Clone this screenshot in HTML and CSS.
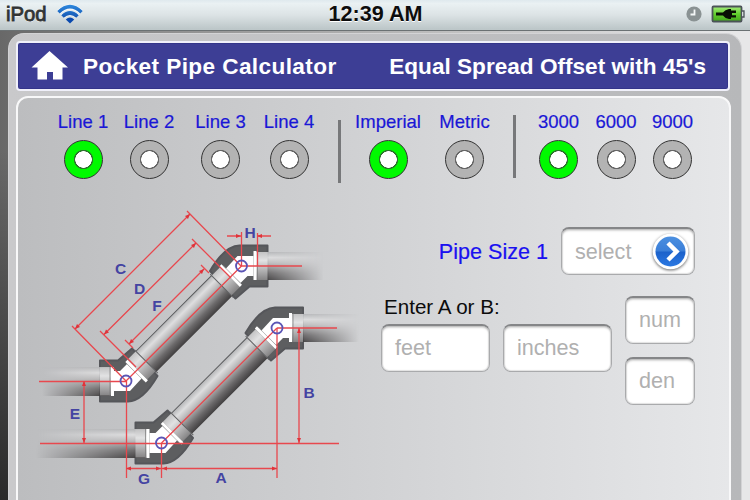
FILE: index.html
```
<!DOCTYPE html>
<html lang="en">
<head>
    <meta charset="UTF-8">
    <meta name="viewport" content="width=device-width, initial-scale=1.0">
    <title>Pocket Pipe Calculator</title>
    <link rel="stylesheet" href="styles.css">
</head>
<body>

    <!-- Status bar -->
    <div class="status-bar">
        <div class="status-left">
            <span class="carrier">iPod</span>
            <svg class="wifi" width="28" height="20" viewBox="0 0 28 20">
                <defs>
                    <linearGradient id="wifiBlue" gradientUnits="userSpaceOnUse" x1="0" y1="0" x2="0" y2="20">
                        <stop offset="0" stop-color="#2f8be0"/>
                        <stop offset="1" stop-color="#0a3f9e"/>
                    </linearGradient>
                </defs>
                <g fill="none" stroke="#fff" stroke-width="5" opacity="0.7">
                    <path d="M2.500 8.200Q14 -1.800 25.500 8.200M6.500 12.500Q14 6 21.500 12.500"/>
                </g>
                <g fill="none" stroke="url(#wifiBlue)" stroke-width="3.600">
                    <path d="M2.500 8.200Q14 -2.800 25.500 8.200M6.500 12.500Q14 5.500 21.500 12.500"/>
                </g>
                <path d="M9.800 15.500Q14 11.500 18.200 15.500L14 19.500Z" fill="#0a49ae"/>
            </svg>
        </div>
        <span class="clock">12:39 AM</span>
        <div class="status-right">
            <svg width="16" height="16" viewBox="0 0 16 16">
                <circle cx="8" cy="8" r="7.600" fill="#8a9293"/>
                <path d="M8.500 3.500V8.500H4.500" fill="none" stroke="#f4f7f7" stroke-width="1.800"/>
            </svg>
            <svg width="34" height="18" viewBox="0 0 34 18">
                <defs>
                    <linearGradient id="battery" x1="0" y1="0" x2="0" y2="1">
                        <stop offset="0" stop-color="#a5ec7c"/>
                        <stop offset="0.500" stop-color="#62cf2e"/>
                        <stop offset="1" stop-color="#43a51d"/>
                    </linearGradient>
                </defs>
                <rect x="1.500" y="1.500" width="29" height="15" rx="1" fill="url(#battery)" stroke="#4b5358" stroke-width="1.800"/>
                <path d="M31 6H33V12H31" fill="#d5dadc" stroke="#4b5358" stroke-width="1.300"/>
                <path d="M5 7.500H12Q14 4.500 18 4H20V5.500H25V8H21V10.200H25V12.500H20V14H18Q14 13.500 12 10.500H5Z" fill="#081004"/>
            </svg>
        </div>
    </div>

    <div class="frame">
        <!-- Title bar -->
        <div class="title-bar">
            <svg class="home" width="38" height="30" viewBox="0 0 38 30">
                <path d="M18.500 0L37 16.500H31.500V28.500H22V21H16V28.500H6.500V16.500H0.500Z" fill="#fff"/>
            </svg>
            <span class="app-name">Pocket Pipe Calculator</span>
            <span class="page-name">Equal Spread Offset with 45's</span>
        </div>

        <div class="panel">
            <!-- Options -->
            <div class="options">
                <div class="option"><span>Line 1</span><i class="radio on"></i></div>
                <div class="option"><span>Line 2</span><i class="radio"></i></div>
                <div class="option"><span>Line 3</span><i class="radio"></i></div>
                <div class="option"><span>Line 4</span><i class="radio"></i></div>
                <div class="divider low"></div>
                <div class="option"><span>Imperial</span><i class="radio on"></i></div>
                <div class="option"><span>Metric</span><i class="radio"></i></div>
                <div class="divider"></div>
                <div class="option"><span>3000</span><i class="radio on"></i></div>
                <div class="option"><span>6000</span><i class="radio"></i></div>
                <div class="option"><span>9000</span><i class="radio"></i></div>
            </div>

            <div class="content">
                <!-- Pipe diagram -->
                <svg class="diagram" width="340" height="300" viewBox="30 200 340 300">
                    <defs>
                        <linearGradient id="pipe" x1="0" y1="0" x2="0" y2="1">
                            <stop offset="0" stop-color="#b4b5b7"/>
                            <stop offset="0.200" stop-color="#dededf"/>
                            <stop offset="0.400" stop-color="#bdbcbd"/>
                            <stop offset="0.750" stop-color="#6b696a"/>
                            <stop offset="1" stop-color="#413f40"/>
                        </linearGradient>
                        <linearGradient id="sleeve" x1="0" y1="0" x2="0" y2="1">
                            <stop offset="0" stop-color="#c3c3c4"/>
                            <stop offset="0.300" stop-color="#e2e2e3"/>
                            <stop offset="1" stop-color="#858485"/>
                        </linearGradient>
                        <linearGradient id="fadeLeft">
                            <stop offset="0" stop-color="#000"/>
                            <stop offset="0.900" stop-color="#fff"/>
                        </linearGradient>
                        <linearGradient id="fadeRight">
                            <stop offset="0.150" stop-color="#fff"/>
                            <stop offset="1" stop-color="#000"/>
                        </linearGradient>
                        <mask id="maskUpperLeft" maskUnits="userSpaceOnUse" x="42" y="360" width="70" height="40">
                            <rect x="42" y="360" width="70" height="40" fill="url(#fadeLeft)"/>
                        </mask>
                        <mask id="maskLowerLeft" maskUnits="userSpaceOnUse" x="36" y="420" width="112" height="42">
                            <rect x="36" y="420" width="112" height="42" fill="url(#fadeLeft)"/>
                        </mask>
                        <mask id="maskRight" maskUnits="userSpaceOnUse" x="12" y="-16" width="70" height="34">
                            <rect x="12" y="-16" width="70" height="34" fill="url(#fadeRight)"/>
                        </mask>
                        <path id="elbow" d="M-26 -20.500H-8L6 -32.500L31.500 -5Q17 20 2 20.500H-26Z" fill="#5d5e60" stroke="#55565a" stroke-width="2" stroke-linejoin="round"/>
                        <path id="inside" d="M-12 -10H-6L1 -17L16 -3L4 10H-12Z" fill="#fff"/>
                        <g id="run">
                            <rect x="-26" y="-13.500" width="12" height="28" fill="url(#sleeve)"/>
                            <path d="M-13.500 -14V15" stroke="#fff" stroke-width="3"/>
                            <path d="M-16 -14V15" stroke="#777" stroke-width="0.700"/>
                            <g transform="translate(115.500 -115)">
                                <g mask="url(#maskRight)">
                                    <rect x="14" y="-14" width="68" height="28" fill="url(#pipe)"/>
                                </g>
                                <rect x="14" y="-14" width="12" height="28" fill="url(#sleeve)"/>
                                <path d="M13.500 -15V14" stroke="#fff" stroke-width="3"/>
                                <path d="M16 -15V14" stroke="#777" stroke-width="0.700"/>
                            </g>
                            <g transform="rotate(-45)">
                                <rect x="27" y="-14" width="109" height="29" fill="url(#pipe)"/>
                                <path d="M27 -14H136" stroke="#58595b" stroke-width="1"/>
                                <rect x="16" y="-14" width="12" height="28" fill="url(#sleeve)"/>
                                <rect x="135" y="-14" width="12" height="28" fill="url(#sleeve)"/>
                                <path d="M28 -16V17M135 -16V17" stroke="#636466" stroke-width="1"/>
                            </g>
                            <use href="#inside"/>
                            <use href="#inside" transform="translate(115.500 -115) rotate(180)"/>
                            <g transform="rotate(-45)">
                                <path d="M14.500 -14V15M148.500 -15V14" stroke="#fff" stroke-width="3"/>
                                <path d="M12.700 -12V13M150.300 -13V12" stroke="#999" stroke-width="0.600"/>
                            </g>
                        </g>
                        <g id="elbows">
                            <use href="#elbow"/>
                            <use href="#elbow" transform="translate(115.500 -115) rotate(180)"/>
                        </g>
                    </defs>

                    <use href="#elbows" transform="translate(126 381)"/>
                    <use href="#elbows" transform="translate(161.500 443)"/>
                    <g mask="url(#maskUpperLeft)">
                        <rect x="42" y="367" width="70" height="29" fill="url(#pipe)"/>
                    </g>
                    <g mask="url(#maskLowerLeft)">
                        <rect x="36" y="429" width="112" height="29" fill="url(#pipe)"/>
                    </g>
                    <use href="#run" transform="translate(126 381)"/>
                    <use href="#run" transform="translate(161.500 443)"/>

                    <!-- dimension lines -->
                    <g class="dims">
                        <path d="M126 381L241.500 266M161.500 443L277 328"/>
                        <path d="M39 381.500H126M40 443.500H339M241 266H302M277 328H337"/>
                        <path d="M75 329L190 214M72 326L126 381M187 211L241 266"/>
                        <path d="M104 334.500L196 243M100 331L136 367M192 239L231 278"/>
                        <path d="M129 344L204 269M125 340L133 348M201 265L209 273"/>
                        <path d="M84 381V443M126.500 381V478M161.500 443V478M277 328V478"/>
                        <path d="M126 468.500H277M299 328V443"/>
                        <path d="M241.500 232V266M257.500 233V266M227 236H241M257 236H271"/>
                    </g>
                    <g class="arrows">
                        <path d="M75 329l2 -5l3 3zM190 214l-5 2l3 3zM104 334.500l2 -5l3 3zM196 243l-5 2l3 3zM129 344l2 -5l3 3zM204 269l-5 2l3 3z"/>
                        <path d="M84 381l-2 5h4zM84 443l-2 -5h4zM299 328l-2 5h4zM299 443l-2 -5h4z"/>
                        <path d="M126 468.500l5 -2v4zM161 468.500l-5 -2v4zM162 468.500l5 -2v4zM277 468.500l-5 -2v4zM241 236l-5 -2v4zM257 236l5 -2v4z"/>
                    </g>
                    <g class="centers">
                        <circle cx="126" cy="381" r="5.500"/>
                        <circle cx="241.500" cy="266" r="5.500"/>
                        <circle cx="161.500" cy="443" r="5.500"/>
                        <circle cx="277" cy="328" r="5.500"/>
                    </g>
                    <g class="dim-labels">
                        <text x="120.500" y="273.500">C</text>
                        <text x="139.500" y="293.500">D</text>
                        <text x="157" y="311">F</text>
                        <text x="250" y="238">H</text>
                        <text x="75" y="419">E</text>
                        <text x="144" y="484">G</text>
                        <text x="221" y="483">A</text>
                        <text x="309" y="398">B</text>
                    </g>
                </svg>

                <!-- Inputs -->
                <div class="form">
                    <div class="size-row">
                        <span class="size-label">Pipe Size 1</span>
                        <div class="field select">
                            <span>select</span>
                            <svg width="42" height="42" viewBox="0 0 42 42">
                                <defs>
                                    <linearGradient id="go" x1="0" y1="0" x2="0" y2="1">
                                        <stop offset="0" stop-color="#4b8fe0"/>
                                        <stop offset="0.480" stop-color="#3b7fd8"/>
                                        <stop offset="0.520" stop-color="#1c62cb"/>
                                        <stop offset="1" stop-color="#2a78e2"/>
                                    </linearGradient>
                                </defs>
                                <circle class="go-ring" cx="20.500" cy="20.500" r="17.800"/>
                                <circle cx="20.500" cy="20.500" r="15" fill="url(#go)"/>
                                <path d="M18 12L26.500 20.500L18 29" fill="none" stroke="#fff" stroke-width="4.500"/>
                            </svg>
                        </div>
                    </div>
                    <div class="length-row">
                        <div class="whole">
                            <span class="enter-label">Enter A or B:</span>
                            <div class="whole-fields">
                                <div class="field">feet</div>
                                <div class="field">inches</div>
                            </div>
                        </div>
                        <div class="fraction">
                            <div class="field">num</div>
                            <div class="field">den</div>
                        </div>
                    </div>
                </div>
            </div>
        </div>
    </div>

</body>
</html>
```
FILE: styles.css
```
* {
    box-sizing: border-box;
}

body {
    font-family: "Liberation Sans", Arial, sans-serif;
    margin: 0;
    height: 500px;
    overflow: hidden;
    display: flex;
    flex-direction: column;
    background:
        linear-gradient(rgba(0, 0, 0, 0) 30%, rgba(0, 0, 0, 0.6)) 0 0 / 20px 100% no-repeat,
        linear-gradient(90deg, #686868 0%, #8c8c8c 20%, #c0c0c0 60%, #e7e7e8 98%);
}

/* Status bar */
.status-bar {
    flex: none;
    height: 31px;
    display: grid;
    grid-template-columns: 1fr auto 1fr;
    align-items: center;
    padding: 0 5px 2px 6px;
    background: linear-gradient(#dfe9ee 0%, #eaf1f3 12%, #dce3e5 50%, #bdc7c9 96%);
    border-bottom: 1px solid #6b7173;
}

.status-left {
    display: flex;
    align-items: center;
    gap: 9px;
}

.carrier {
    font-size: 20.3px;
    color: #303334;
    -webkit-text-stroke: 0.8px #303334;
    text-shadow: 0 1px 0 #fff;
}

.clock {
    font-size: 21.6px;
    font-weight: bold;
    color: #0c0c0c;
    text-shadow: 0 1px 0 #fff;
}

.status-right {
    display: flex;
    justify-content: flex-end;
    align-items: center;
    gap: 9px;
}

/* Rounded frame */
.frame {
    flex: 1;
    margin: 2px 8px 0;
    padding: 8px 10px 0 8px;
    border-radius: 16px 16px 0 0;
    background: linear-gradient(90deg, #c9c9cb, #b7b8ba);
    border: 1px solid #d3d3d5;
    border-width: 1px 1px 0;
}

.title-bar {
    display: flex;
    align-items: center;
    height: 50px;
    margin: -1px 1px 0 -1px;
    padding: 0 22px 0 13px;
    background: #3d3e95;
    border: 2px solid #f0f0fa;
    border-radius: 4px;
    box-shadow: inset 0 0 0 1px #34358a;
    color: #fff;
    font-size: 22.6px;
    font-weight: bold;
    white-space: nowrap;
}

.app-name {
    margin-left: 14px;
    letter-spacing: 0.4px;
}

.page-name {
    margin-left: auto;
}

.app-name,
.page-name {
    padding-top: 2px;
}

.panel {
    height: 420px;
    margin: 5px 0 0 -1px;
    border: 2px solid #f8f8f9;
    border-radius: 12px 12px 0 0;
    background: linear-gradient(90deg, #bcbdbf, #cfd0d2 45%, #e6e7e9);
}

/* Radio options */
.options {
    display: grid;
    grid-template-columns: 66px 66px 77px 60px 40px 58px 95px 4px 85px 30px 83px;
    height: 102px;
    padding: 13px 0 0 32px;
}

.option {
    display: flex;
    flex-direction: column;
    align-items: center;
    gap: 8px;
    color: #1a17d6;
    font-size: 18.5px;
    line-height: 21px;
    white-space: nowrap;
    -webkit-text-stroke: 0.2px #1a17d6;
}

.radio {
    width: 39px;
    height: 39px;
    border-radius: 50%;
    border: 1.5px solid #333;
    background: radial-gradient(circle, #fff 0 8px, #666 8.5px 9.3px, #b3b3b3 10px);
}

.radio.on {
    background: radial-gradient(circle, #fff 0 8px, #2b752b 8.5px 9.3px, #00fa00 10px);
}

.divider {
    width: 3px;
    height: 63px;
    margin-top: 4px;
    justify-self: center;
    background: #77787a;
}

.divider.low {
    margin-top: 9px;
}

.content {
    display: flex;
}

.diagram {
    flex: none;
    margin-left: 12px;
}

.dims {
    fill: none;
    stroke: #e8484e;
    stroke-width: 1.3;
}

.arrows {
    fill: #e0333a;
}

.centers {
    fill: none;
    stroke: #5b55b5;
    stroke-width: 1.8;
}

.dim-labels {
    fill: #4444a2;
    font-size: 15.5px;
    font-weight: bold;
    text-anchor: middle;
}

/* Form */
.form {
    width: 314px;
    margin: 27px 0 0 11px;
}

.size-row {
    display: flex;
    justify-content: flex-end;
    align-items: center;
    gap: 13px;
}

.size-label {
    padding-top: 2px;
    color: #1a10f0;
    font-size: 21.6px;
    -webkit-text-stroke: 0.2px #1a10f0;
}

.field {
    height: 48px;
    padding: 0 13px;
    border: 1px solid #a9aaac;
    border-top: 2px solid #858688;
    border-radius: 8px;
    background: #fff;
    box-shadow: inset 0 2px 2px rgba(0, 0, 0, 0.15), inset 0 0 1px 1px rgba(0, 0, 0, 0.12);
    color: #b0b0b0;
    font-size: 21.6px;
    line-height: 44px;
}

.select {
    width: 134px;
    display: flex;
    justify-content: space-between;
    align-items: center;
    padding-right: 2px;
}

.go-ring {
    fill: #fff;
    filter: drop-shadow(0 1px 1.5px rgba(0, 0, 0, 0.6));
}

.length-row {
    display: flex;
    justify-content: space-between;
    margin-top: 21px;
}

.enter-label {
    display: block;
    height: 28px;
    padding-left: 3px;
    font-size: 20.6px;
    line-height: 21px;
    color: #0c0c0c;
}

.whole-fields {
    display: flex;
    gap: 13px;
}

.whole-fields .field {
    width: 109px;
}

.fraction {
    display: flex;
    flex-direction: column;
    gap: 13px;
}

.fraction .field {
    width: 70px;
}
```
